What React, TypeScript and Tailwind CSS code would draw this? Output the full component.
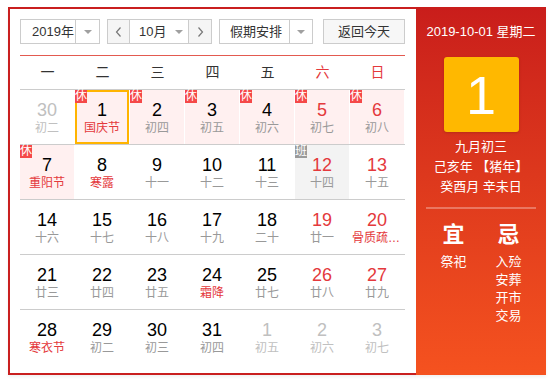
import React from "react";

type Day = {
  n: number;
  l: string;
  red?: boolean;
  lred?: boolean;
  out?: boolean;
  rest?: boolean;
  work?: boolean;
  sel?: boolean;
  pink?: boolean;
};

const rows: Day[][] = [
  [
    { n: 30, l: "初二", out: true },
    { n: 1, l: "国庆节", lred: true, rest: true, sel: true, pink: true },
    { n: 2, l: "初四", rest: true, pink: true },
    { n: 3, l: "初五", rest: true, pink: true },
    { n: 4, l: "初六", rest: true, pink: true },
    { n: 5, l: "初七", red: true, rest: true, pink: true },
    { n: 6, l: "初八", red: true, rest: true, pink: true },
  ],
  [
    { n: 7, l: "重阳节", lred: true, rest: true, pink: true },
    { n: 8, l: "寒露", lred: true },
    { n: 9, l: "十一" },
    { n: 10, l: "十二" },
    { n: 11, l: "十三" },
    { n: 12, l: "十四", red: true, work: true },
    { n: 13, l: "十五", red: true },
  ],
  [
    { n: 14, l: "十六" },
    { n: 15, l: "十七" },
    { n: 16, l: "十八" },
    { n: 17, l: "十九" },
    { n: 18, l: "二十" },
    { n: 19, l: "廿一", red: true },
    { n: 20, l: "骨质疏松日", red: true, lred: true },
  ],
  [
    { n: 21, l: "廿三" },
    { n: 22, l: "廿四" },
    { n: 23, l: "廿五" },
    { n: 24, l: "霜降", lred: true },
    { n: 25, l: "廿七" },
    { n: 26, l: "廿八", red: true },
    { n: 27, l: "廿九", red: true },
  ],
  [
    { n: 28, l: "寒衣节", lred: true },
    { n: 29, l: "初二" },
    { n: 30, l: "初三" },
    { n: 31, l: "初四" },
    { n: 1, l: "初五", out: true },
    { n: 2, l: "初六", out: true },
    { n: 3, l: "初七", out: true },
  ],
];

const Tri = () => (
  <svg width="8" height="4" viewBox="0 0 8 4">
    <path d="M0 0 L8 0 L4 4 Z" fill="#a0a0a0" />
  </svg>
);

const Chev = ({ left }: { left?: boolean }) => (
  <svg width="7" height="10" viewBox="0 0 7 10">
    <path
      d={left ? "M5.5 0.5 L1.5 5 L5.5 9.5" : "M1.5 0.5 L5.5 5 L1.5 9.5"}
      stroke="#777"
      strokeWidth="1.2"
      fill="none"
    />
  </svg>
);

function Cell({ d }: { d: Day }) {
  const bg = d.work ? "bg-[#f3f3f3]" : d.pink ? "bg-[#fff0f0]" : "bg-white";
  const numColor = d.out ? "text-[#c0c0c0]" : d.red ? "text-[#e4393c]" : "text-black";
  const lColor = d.out ? "text-[#c0c0c0]" : d.lred ? "text-[#e4393c]" : "text-[#999]";
  return (
    <div className={`relative h-[54px] flex flex-col items-center pt-[10px] border-r border-white ${bg}`}>
      {d.sel && <div className="absolute inset-0 border-2 border-[#ffb400]" />}
      {d.rest && (
        <div className="absolute left-0 top-0 w-[12px] h-[13px] bg-[#f54848] text-white text-[12px] leading-[13px] text-center">
          休
        </div>
      )}
      {d.work && (
        <div className="absolute left-0 top-0 w-[12px] h-[13px] bg-[#9a9a9a] text-white text-[12px] leading-[13px] text-center">
          班
        </div>
      )}
      <div className={`text-[18px] leading-[20px] ${numColor}`}>{d.n}</div>
      <div className={`text-[12px] leading-[16px] max-w-[50px] truncate ${lColor}`}>{d.l}</div>
    </div>
  );
}

export default function App() {
  const weekdays = ["一", "二", "三", "四", "五", "六", "日"];
  return (
    <div className="font-['Liberation_Sans','Noto_Sans_CJK_SC',sans-serif] bg-white w-[552px] h-[380px] pt-[7px] pl-[8px]">
      <div className="w-[538px] h-[368px] border-2 border-[#c91f1f] flex shadow-[0_2px_3px_rgba(0,0,0,0.06)]">
        {/* left */}
        <div className="w-[406px] pl-[10px] pr-[11px] pt-[10px] flex flex-col">
          <div className="flex h-[25px] text-[13px] text-[#333]">
            <div className="w-[80px] border border-[#ccc] flex">
              <div className="w-[54px] pl-[11px] flex items-center">2019年</div>
              <div className="flex-1 border-l border-[#ccc] flex items-center justify-center">
                <Tri />
              </div>
            </div>
            <div className="ml-[7px] w-[105px] border border-[#ccc] flex">
              <div className="w-[22px] bg-[#f5f5f5] border-r border-[#ccc] flex items-center justify-center">
                <Chev left />
              </div>
              <div className="flex-1 pl-[9px] flex items-center">
                <span>10月</span>
                <span className="ml-[9px] flex items-center">
                  <Tri />
                </span>
              </div>
              <div className="w-[23px] bg-[#f5f5f5] border-l border-[#ccc] flex items-center justify-center">
                <Chev />
              </div>
            </div>
            <div className="ml-[7px] w-[94px] border border-[#ccc] flex">
              <div className="w-[69px] pl-[10px] flex items-center">假期安排</div>
              <div className="flex-1 border-l border-[#ccc] flex items-center justify-center">
                <Tri />
              </div>
            </div>
            <div className="ml-[10px] w-[82px] border border-[#ccc] bg-[#f7f7f7] flex items-center justify-center">
              返回今天
            </div>
          </div>
          <div className="mt-[11px] h-[35px] border-t border-b border-t-[#e35a50] border-b-[#ccc] grid grid-cols-7 items-center text-[14px]">
            {weekdays.map((w, i) => (
              <div key={w} className={`text-center ${i >= 5 ? "text-[#e4393c]" : "text-[#333]"}`}>
                {w}
              </div>
            ))}
          </div>
          {rows.map((r, ri) => (
            <div
              key={ri}
              className={`grid grid-cols-7 ${ri < rows.length - 1 ? "border-b border-[#ccc]" : ""}`}
            >
              {r.map((d, di) => (
                <Cell key={di} d={d} />
              ))}
            </div>
          ))}
        </div>
        {/* right */}
        <div className="-mt-[2px] -mb-[2px] -mr-[2px] flex-1 bg-linear-to-b from-[#c91d1b] to-[#f5521f] flex flex-col items-center text-white pt-[16px]">
          <div className="text-[13px] leading-[18px]">2019-10-01 星期二</div>
          <div className="mt-[16px] w-[75px] h-[75px] rounded-[3px] bg-[#ffb800] shadow-[0_1px_3px_rgba(0,0,0,0.15)] flex items-center justify-center text-[54px] leading-none">
            1
          </div>
          <div className="mt-[5px] text-[13px] leading-[20px] text-center">
            <div>九月初三</div>
            <div>己亥年 【猪年】</div>
            <div>癸酉月 辛未日</div>
          </div>
          <div className="mt-[10px] w-[110px] h-[2px] bg-white/30" />
          <div className="mt-[13px] w-[110px] grid grid-cols-2">
            <div className="flex flex-col items-center">
              <div className="text-[22px] leading-[26px] font-bold">宜</div>
              <div className="mt-[5px] text-[13px] leading-[18px] text-center">
                <div>祭祀</div>
              </div>
            </div>
            <div className="flex flex-col items-center">
              <div className="text-[22px] leading-[26px] font-bold">忌</div>
              <div className="mt-[5px] text-[13px] leading-[18px] text-center">
                <div>入殓</div>
                <div>安葬</div>
                <div>开市</div>
                <div>交易</div>
              </div>
            </div>
          </div>
        </div>
      </div>
    </div>
  );
}
